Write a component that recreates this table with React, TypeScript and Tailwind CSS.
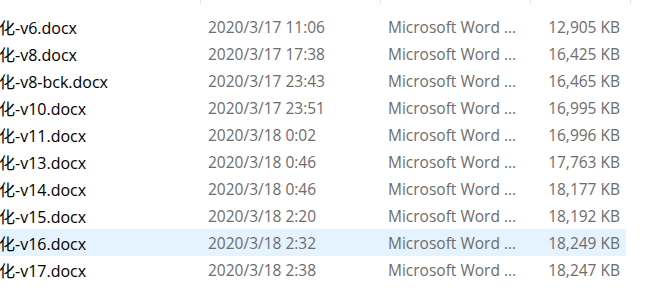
import React from 'react';

interface FileRow {
  name: string;
  modified: string;
  size: string;
  selected?: boolean;
}

const rows: FileRow[] = [
  { name: '化-v6.docx', modified: '2020/3/17 11:06', size: '12,905 KB' },
  { name: '化-v8.docx', modified: '2020/3/17 17:38', size: '16,425 KB' },
  { name: '化-v8-bck.docx', modified: '2020/3/17 23:43', size: '16,465 KB' },
  { name: '化-v10.docx', modified: '2020/3/17 23:51', size: '16,995 KB' },
  { name: '化-v11.docx', modified: '2020/3/18 0:02', size: '16,996 KB' },
  { name: '化-v13.docx', modified: '2020/3/18 0:46', size: '17,763 KB' },
  { name: '化-v14.docx', modified: '2020/3/18 0:46', size: '18,177 KB' },
  { name: '化-v15.docx', modified: '2020/3/18 2:20', size: '18,192 KB' },
  { name: '化-v16.docx', modified: '2020/3/18 2:32', size: '18,249 KB', selected: true },
  { name: '化-v17.docx', modified: '2020/3/18 2:38', size: '18,247 KB' },
];

const font = 'font-["Open_Sans","Noto_Sans_CJK_SC",sans-serif]';

export default function App() {
  return (
    <div className={`w-[648px] h-[293px] bg-white overflow-hidden text-[15.5px] ${font}`}>
      {/* column dividers left over from the header */}
      <div className="flex h-[13px]">
        <div className="w-[201px] h-[4px] border-r border-[#e5e5e5]" />
        <div className="w-[180px] h-[4px] border-r border-[#e5e5e5]" />
        <div className="w-[150px] h-[4px] border-r border-[#e5e5e5]" />
        <div className="w-[100px] h-[4px] border-r border-[#e5e5e5]" />
      </div>
      <div className="flex flex-col">
        {rows.map((r) => (
          <div
            key={r.name}
            className={`flex items-center h-[27px] w-[626px] pt-[2px] ${r.selected ? 'bg-[#e5f3ff]' : ''}`}
          >
            <div className="w-[200px] overflow-hidden whitespace-nowrap text-[16px] text-[#000000]">
              <span className="-ml-[1px] inline-block">{r.name}</span>
            </div>
            <div className="w-[180px] pl-[8px] whitespace-nowrap text-[#6d6d6d]">{r.modified}</div>
            <div className="w-[150px] pl-[8px] whitespace-nowrap text-[#6d6d6d]">Microsoft Word ...</div>
            <div className="w-[90px] text-right whitespace-nowrap text-[#6d6d6d]">{r.size}</div>
          </div>
        ))}
      </div>
    </div>
  );
}
